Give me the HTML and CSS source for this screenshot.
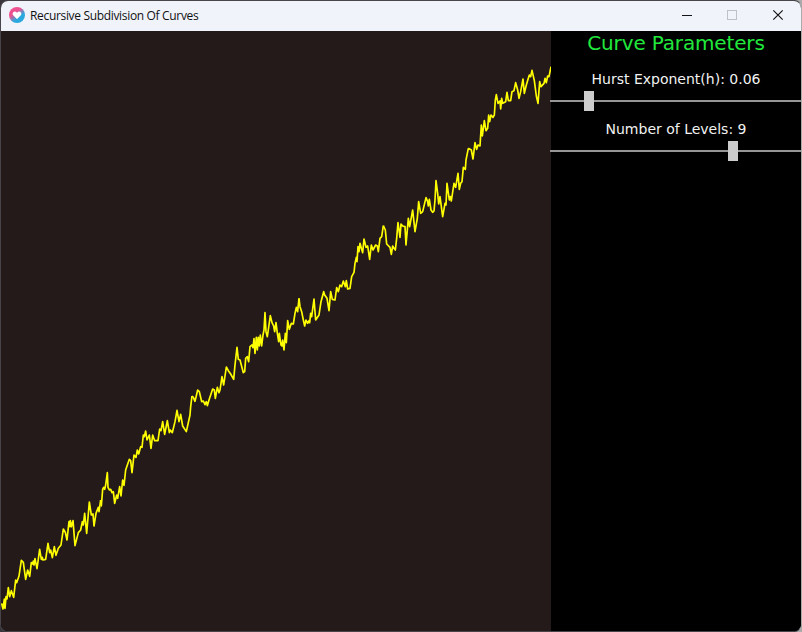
FILE: index.html
```html
<!DOCTYPE html>
<html lang="en">
<head>
<meta charset="utf-8">
<title>Recursive Subdivision Of Curves</title>
<link rel="stylesheet" href="styles.css">
</head>
<body>
<div class="window">
  <header class="titlebar">
    <svg class="logo" width="16" height="16" viewBox="0 0 16 16">
      <defs><linearGradient id="ring" x1="0.1" y1="0" x2="0.9" y2="1"><stop offset="0.35" stop-color="#ef5190"/><stop offset="0.65" stop-color="#2aa9df"/></linearGradient></defs>
      <circle cx="8" cy="8" r="8" fill="url(#ring)"/>
      <path d="M8 12 4.600 8.600C3 6.900 4 4.800 5.800 4.800c1 0 1.700.5 2.200 1.200.5-.7 1.200-1.200 2.200-1.200 1.800 0 2.800 2.100 1.200 3.800Z" fill="#fff" stroke="#fff" stroke-width=".3"/>
    </svg>
    <h1 class="title">Recursive Subdivision Of Curves</h1>
    <svg class="controls" width="120" height="30" viewBox="0 0 120 30" fill="none">
      <path d="M1 14.500H11" stroke="#151519"/>
      <rect x="46.500" y="9.500" width="9" height="9" stroke="#bfc1c9"/>
      <path d="M92.300 9.300 101.700 18.700M101.700 9.300 92.300 18.700" stroke="#151519" stroke-width="1.200"/>
    </svg>
  </header>
  <main class="content">
    <svg class="plot" width="550" height="600" viewBox="1 31 550 600">
      <g class="curve">
        <path transform="translate(0 500) scale(.33333)" d="M5 310 9 327 13 297 15 325 18 290 21 297 25 263 29 290 34 272 41 292 47 240 50 248 57 228 64 181 70 187 77 238 83 210 89 229 94 188 98 192 100 183 102 195 105 176 111 206 119 148 124 178 127 172 129 180 137 178 144 130 149 158 152 150 157 173 163 140 168 166 175 145 183 135 190 87 196 97 201 120 207 65 210 80 211 62 214 80 219 62 225 137 235 98 242 90 247 65 250 75 254 40 260 100 268 6 274 45 279 42 282 78 288 40 295 22 297 35 302 0"/>
        <path transform="translate(90 400) scale(.33333)" d="M32 300 34 318 38 268 41 262 44 268 47 255 52 218 54 262 58 270 62 268 66 278 70 275 74 310 80 285 83 295 89 260 93 288 98 240 102 256 107 210 118 178 122 182 126 218 132 165 138 172 142 150 146 162 152 140 156 142 160 105 163 110 167 93 171 120 178 105 183 145 188 105 194 122 204 122 209 87 213 92 218 65 224 103 232 62 238 98 241 90 247 98 255 65 261 31 267 65 272 43 278 78 289 95 300 45 302 20 306 -12"/>
        <path transform="translate(180 300) scale(.33333)" d="M36 288 40 292 45 304 53 270 58 275 65 305 70 303 75 314 79 305 82 317 87 300 98 267 103 270 106 295 112 262 117 278 120 270 126 230 131 255 139 201 145 212 152 222 161 238 165 195 171 142 175 178 180 180 190 218 194 215 197 175 202 170 206 185 210 140 216 135 219 143 222 116 225 160 229 112 232 150 235 112 238 138 241 105 245 138 249 105 252 90 255 38 258 95 262 110 267 75 271 47 276 68 281 78 284 95 288 68 292 100 296 125 298 100 303 135 306 138 308 120 312 150 316 100 319 128 323 62 328 88 334 70 340 72 345 40 349 22 353 35 357 -5"/>
        <path transform="translate(290 220) scale(.33333)" d="M27 235 30 260 35 275 40 300 44 318 48 300 53 310 57 302 59 308 62 280 65 290 72 237 77 300 87 285 93 245 101 215 104 225 111 235 117 272 122 215 127 238 135 240 140 203 145 215 150 195 155 200 160 183 166 200 169 182 173 207 180 205 185 170 192 157 195 130 199 112 201 125 204 80 207 95 210 70 214 85 218 98 222 57 228 82 233 78 239 118 244 75 249 90 257 75 262 78 265 95 270 55 275 50 280 17"/>
        <path transform="translate(380 130) scale(.33333)" d="M10 287 16 300 20 342 30 352 34 373 38 348 42 355 46 360 50 325 54 278 60 322 63 282 68 288 75 290 78 345 85 265 89 290 98 240 105 305 112 265 116 215 122 250 128 245 138 203 143 215 145 228 148 208 153 240 158 247 162 243 165 210 168 152 173 190 176 222 180 200 188 260 195 220 198 225 201 160 208 210 211 200 214 213 222 160 227 172 234 130 238 178 242 160 246 155 250 112 256 118 258 90 265 55"/>
        <path transform="translate(450 60) scale(.33333)" d="M55 265 64 270 69 297 75 248 80 268 84 255 90 258 94 195 97 228 103 182 108 212 113 205 116 165 119 185 123 165 129 172 133 165 136 120 139 104 144 130 150 123 152 147 155 115 158 130 167 125 171 97 175 122 182 122 186 95 192 92 197 68 203 90 207 115 212 95 219 57 223 100 229 75 235 55 238 45 242 50 246 31 253 62 259 108 264 130 269 65 273 80 282 70 285 55 289 68 293 48 297 50 303 20"/>
      </g>
    </svg>
    <aside class="panel">
      <h2 class="heading">Curve Parameters</h2>
      <div class="label">Hurst Exponent(h): 0.06</div>
      <div class="slider"><div class="track hurst"></div><div class="thumb"></div><div class="track"></div></div>
      <div class="label">Number of Levels: 9</div>
      <div class="slider"><div class="track levels"></div><div class="thumb"></div><div class="track"></div></div>
    </aside>
  </main>
</div>
</body>
</html>
```
FILE: styles.css
```css
* { box-sizing: border-box; }
body { margin: 0; background: linear-gradient(to right, #39373b 50%, #aaa 50%); }
h1, h2 { margin: 0; font-weight: normal; }
.window {
  width: 802px;
  height: 632px;
  border: 1px solid #48454a;
  border-right-color: #aaa;
  border-radius: 8px;
  overflow: hidden;
  background: #000;
}
.titlebar {
  height: 30px;
  display: flex;
  align-items: center;
  padding: 0 0 0 8px;
  background: #f0f3fa;
}
.logo { margin-top: -2px; }
.title {
  margin-left: 5px;
  font: 12px/28px "Open Sans", "Noto Sans", sans-serif;
  letter-spacing: -0.33px;
  color: #111;
  white-space: nowrap;
  flex: 1;
}
.controls { flex: none; }
.content { display: flex; height: 600px; }
.plot { flex: none; background: #251a1a; }
.curve path {
  fill: none;
  stroke: #ff0;
  stroke-width: 5;
  stroke-linejoin: round;
}
.panel {
  flex: 1;
  background: #000;
  color: #f2f2f2;
  font-family: "DejaVu Sans", sans-serif;
  text-align: center;
}
.heading { font-size: 20px; line-height: 24px; height: 38px; letter-spacing: -0.15px; color: #20e83c; }
.label { font-size: 14px; line-height: 20px; height: 22px; }
.slider { display: flex; align-items: center; height: 20px; margin-bottom: 8px; }
.track { flex: 1; height: 2px; background: #969696; }
.hurst { flex: none; width: 34px; margin-left: -1px; }
.levels { flex: none; width: 178px; margin-left: -1px; }
.thumb { flex: none; width: 10px; height: 20px; background: #ccc; }
```
